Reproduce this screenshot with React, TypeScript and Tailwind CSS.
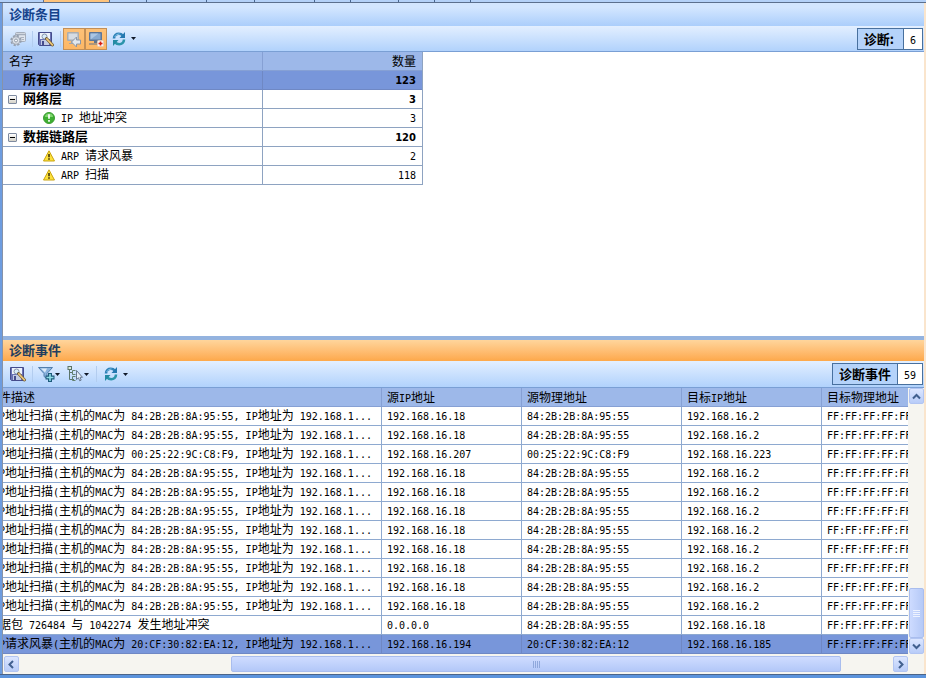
import React from "react";

const LATIN = 'font-["DejaVu_Sans_Mono",monospace] text-[10px] leading-none';

/* Sets Latin runs in a half-width face so they keep step with the full-width characters. */
function Mixed({ children }: { children: string }) {
  const parts = children.split(/([\x20-\x7e]+)/).filter(Boolean);
  return (
    <span className="whitespace-pre">
      {parts.map((p, i) =>
        /^[\x20-\x7e]/.test(p) ? (
          <span key={i} className={LATIN}>
            {p}
          </span>
        ) : (
          p
        ),
      )}
    </span>
  );
}

function SaveFindIcon() {
  return (
    <svg width="18" height="18" viewBox="0 0 18 18" aria-hidden="true">
      <path d="M1.500 2.500h13v13h-12l-1-1z" fill="#6a72b4" stroke="#454c8c" />
      <path d="M3 3h10v6H3z" fill="#eef3fb" />
      <path d="M4 10h8v5H4z" fill="#c3cbe4" />
      <path d="M5 11h2v4H5z" fill="#454c8c" />
      <circle cx="7.500" cy="6.500" r="2.500" fill="#d9ecfa" stroke="#8794ab" />
      <path d="M9.500 8.500l6 6.500" stroke="#6b5733" strokeWidth="3" strokeLinecap="round" />
      <path d="M9.800 8.800l5.600 6" stroke="#eac679" strokeWidth="1.700" strokeLinecap="round" />
    </svg>
  );
}

function SettingsIcon() {
  return (
    <svg width="18" height="18" viewBox="0 0 18 18" aria-hidden="true">
      <rect x="6.500" y="2.500" width="10" height="9" rx="1" fill="#e0e5ed" stroke="#a4adbb" />
      <path d="M7 4.500h9" stroke="#a4adbb" strokeWidth="1.500" />
      <path d="M12 7.500h3M13 9.500h2" stroke="#aab2bf" />
      <circle cx="7" cy="10.500" r="4.700" fill="#d4d9e1" stroke="#959fae" strokeWidth="2" strokeDasharray="2.200 1.500" />
      <circle cx="7" cy="10.500" r="3.800" fill="#dde2e9" stroke="#a2aab7" />
      <circle cx="7" cy="10.500" r="1.500" fill="#f5f8fc" stroke="#929ca9" />
    </svg>
  );
}

function ScreenBackIcon() {
  return (
    <svg width="18" height="18" viewBox="0 0 18 18" aria-hidden="true">
      <rect x="2" y="2" width="12" height="9" rx="1" fill="#a9adb0" />
      <rect x="3.500" y="3.500" width="9" height="6" fill="#d5dce4" />
      <path d="M6 11h4v2H6zM4 13h7v1H4z" fill="#a0a4a9" />
      <path d="M6.500 12l5-5v3h4v4h-4v3z" fill="#e1e7ee" stroke="#8c98a8" />
    </svg>
  );
}

function ScreenAddIcon() {
  return (
    <svg width="18" height="18" viewBox="0 0 18 18" aria-hidden="true">
      <rect x="2" y="2" width="13" height="9" rx="1" fill="#5d7698" />
      <rect x="3.500" y="3.500" width="10" height="6" fill="#87a9d0" />
      <path d="M3.500 9.500v-6h8z" fill="#abc6e4" />
      <path d="M7 11h4v2H7zM2 13.500h9v1H2z" fill="#65758a" />
      <rect x="10.500" y="10.500" width="6" height="6" rx="1" fill="#fff6ef" stroke="#e2cdb9" />
      <path d="M13.500 11.500v4M11.500 13.500h4" stroke="#d81e10" strokeWidth="1.600" />
    </svg>
  );
}

function RefreshIcon() {
  return (
    <svg width="16" height="16" viewBox="0 0 16 16" aria-hidden="true">
      <path d="M3 7.500C3 4.300 5.300 2.800 7.800 2.800c1.700 0 3 .6 3.800 1.600" fill="none" stroke="#2e82b8" strokeWidth="2.600" />
      <path d="M14 1v6H8.500z" fill="#2478af" />
      <path d="M13 8.500c0 3.200-2.300 4.700-4.800 4.700-1.700 0-3-.6-3.800-1.600" fill="none" stroke="#2b94aa" strokeWidth="2.600" />
      <path d="M2 15V9h5.500z" fill="#238aa3" />
      <path d="M3.800 6C4.600 4 6.300 3 8.500 3" fill="none" stroke="#8cc6e8" />
    </svg>
  );
}

function FilterIcon() {
  return (
    <svg width="18" height="18" viewBox="0 0 18 18" aria-hidden="true">
      <path d="M1.500 2.500h14l-5.500 6v5l-3-2v-3z" fill="#8cb4df" stroke="#527fae" />
      <path d="M4 3.500h6l-2 4z" fill="#dcebfa" />
      <path d="M13 8v9M8.500 12.500h9" stroke="#1d5b7c" strokeWidth="4" />
      <path d="M13 9v7M9.500 12.500h7" stroke="#8fdce6" strokeWidth="1.600" />
    </svg>
  );
}

function TreeIcon() {
  return (
    <svg width="18" height="18" viewBox="0 0 18 18" aria-hidden="true">
      <path d="M3.500 4v10.500H8M3.500 7.500H7" fill="none" stroke="#5b7469" />
      <rect x="2" y="1.500" width="3.500" height="3" fill="#dcebdc" stroke="#5b7469" />
      <path d="M9.500 5.500h-3v4h3M9.500 11.500h-3v4h3" fill="none" stroke="#63806f" />
      <path d="M10.500 5.500v9l2-1.700 1.200 3 1.500-.7-1.200-2.800h2.500z" fill="#e4eefa" stroke="#68788f" />
    </svg>
  );
}

function Caret() {
  return (
    <svg width="5" height="3" viewBox="0 0 5 3" aria-hidden="true">
      <path d="M0 0h5L2.500 3z" fill="#101828" />
    </svg>
  );
}

function OkIcon() {
  return (
    <svg width="12" height="12" viewBox="0 0 12 12" aria-hidden="true">
      <circle cx="6" cy="6" r="5.500" fill="#3eae31" stroke="#3c9c33" />
      <path d="M2 5a4 3.500 0 0 1 8 0z" fill="#80d66e" />
      <path d="M6 2.300v4.500M6 8v1.700" stroke="#fff" strokeWidth="1.700" />
    </svg>
  );
}

function WarnIcon() {
  return (
    <svg width="12" height="12" viewBox="0 0 12 12" aria-hidden="true">
      <path d="M6 .8L11.500 11H.5z" fill="#fce13b" stroke="#c9a412" strokeLinejoin="round" />
      <path d="M6 4v3.300M6 8.300v1.500" stroke="#33290a" strokeWidth="1.500" />
    </svg>
  );
}

function Divider() {
  return <span className="mr-[2px] ml-[3px] h-4 w-px bg-[#b3cdef]" />;
}

function ToolButton(props: { label: string; active?: boolean; caret?: string; children: React.ReactNode }) {
  return (
    <button
      type="button"
      aria-label={props.label}
      className={
        "flex h-[22px] items-center justify-center " +
        (props.caret ?? "w-[22px]") +
        (props.active ? " border border-[#c38f56] bg-linear-to-b from-[#fdc178] to-[#fdb765]" : "")
      }
    >
      {props.children}
      {props.caret && <Caret />}
    </button>
  );
}

function Badge({ label, value }: { label: string; value: string }) {
  return (
    <div className="ml-auto flex h-[22px] items-stretch border border-[#48709e] bg-[#b5d3fa] text-[13px] leading-5 font-bold">
      <span className="border-r border-[#48709e] px-[6px] whitespace-pre">{label}</span>
      <span className="flex items-center bg-white px-[6px] font-normal">
        <Mixed>{value}</Mixed>
      </span>
    </div>
  );
}

type TreeRow = { name: string; count: string; kind: "all" | "group" | "ok" | "warn" };

const tree: TreeRow[] = [
  { name: "所有诊断", count: "123", kind: "all" },
  { name: "网络层", count: "3", kind: "group" },
  { name: "IP 地址冲突", count: "3", kind: "ok" },
  { name: "数据链路层", count: "120", kind: "group" },
  { name: "ARP 请求风暴", count: "2", kind: "warn" },
  { name: "ARP 扫描", count: "118", kind: "warn" },
];

function DiagnosisTable() {
  return (
    <table className="w-[420px] table-fixed border-separate border-spacing-0 border-r border-[#8ea3c1] leading-4">
      <thead>
        <tr className="bg-[#9db8e9]">
          <th className="h-[19px] w-[260px] border-r border-b border-[#86a0d4] p-0 pl-[6px] text-left font-normal">名字</th>
          <th className="h-[19px] border-b border-[#86a0d4] p-0 pr-[6px] text-right font-normal">数量</th>
        </tr>
      </thead>
      <tbody>
        {tree.map((r) => {
          const strong = r.kind === "all" || r.kind === "group";
          const cell = r.kind === "all" ? "border-[#6f88c4]" : "border-[#8ea3c1]";
          return (
            <tr key={r.name} className={r.kind === "all" ? "bg-[#7896da]" : "bg-white"}>
              <td className={"h-[19px] border-r border-b p-0 " + cell}>
                <div className={"flex h-[18px] items-center " + (strong ? "text-[13px] font-bold" : "pl-[40px]")}>
                  {r.kind === "all" && <span className="w-[20px]" />}
                  {r.kind === "group" && (
                    <button
                      type="button"
                      aria-label="折叠"
                      className="mr-[6px] ml-[5px] flex size-[9px] items-center justify-center rounded-[1px] border border-[#7f8ba0] bg-linear-to-b from-white to-[#d5d2c8]"
                    >
                      <span className="h-px w-[5px] bg-black" />
                    </button>
                  )}
                  {r.kind === "ok" && <OkIcon />}
                  {r.kind === "warn" && <WarnIcon />}
                  <span className={"pb-0.5 " + (strong ? "" : "pl-[6px]")}>
                    <Mixed>{r.name}</Mixed>
                  </span>
                </div>
              </td>
              <td className={"h-[19px] border-b p-0 pr-[6px] text-right align-top " + cell}>
                {strong ? (
                  <span className='font-["DejaVu_Sans",sans-serif] text-[10px] leading-none font-bold'>{r.count}</span>
                ) : (
                  <Mixed>{r.count}</Mixed>
                )}
              </td>
            </tr>
          );
        })}
      </tbody>
    </table>
  );
}

const scan = (mac: string, srcIp: string, dstIp: string) => [
  `ARP地址扫描(主机的MAC为 ${mac}, IP地址为 192.168.1...`,
  srcIp,
  mac,
  dstIp,
  "FF:FF:FF:FF:FF:FF",
];

const usual = () => scan("84:2B:2B:8A:95:55", "192.168.16.18", "192.168.16.2");

const events: string[][] = [
  usual(),
  usual(),
  scan("00:25:22:9C:C8:F9", "192.168.16.207", "192.168.16.223"),
  ...Array.from({ length: 8 }, usual),
  ["数据包 726484 与 1042274 发生地址冲突", "0.0.0.0", "84:2B:2B:8A:95:55", "192.168.16.18", "FF:FF:FF:FF:FF:FF"],
  [
    "ARP请求风暴(主机的MAC为 20:CF:30:82:EA:12, IP地址为 192.168.1...",
    "192.168.16.194",
    "20:CF:30:82:EA:12",
    "192.168.16.185",
    "FF:FF:FF:FF:FF:FF",
  ],
];

function EventTable() {
  const heads = ["事件描述", "源IP地址", "源物理地址", "目标IP地址", "目标物理地址"];
  const widths = ["w-[400px]", "w-[140px]", "w-[160px]", "w-[140px]", "w-[160px]"];
  return (
    <table className="-ml-[21px] w-[1000px] table-fixed border-separate border-spacing-0 leading-4">
      <thead>
        <tr className="bg-[#9db8e9]">
          {heads.map((h, i) => (
            <th
              key={h}
              className={"h-[19px] border-r border-b border-[#86a0d4] p-0 pl-[5px] text-left font-normal " + widths[i]}
            >
              <Mixed>{h}</Mixed>
            </th>
          ))}
        </tr>
      </thead>
      <tbody>
        {events.map((row, i) => {
          const selected = i === events.length - 1;
          return (
            <tr key={i} className={selected ? "bg-[#7896da]" : "bg-white"}>
              {row.map((c, j) => (
                <td
                  key={j}
                  className={
                    "h-[19px] border-r border-b p-0 pl-[5px] align-top " +
                    (selected ? "border-[#6f88c4]" : "border-[#8ea9d0]")
                  }
                >
                  <Mixed>{c}</Mixed>
                </td>
              ))}
            </tr>
          );
        })}
      </tbody>
    </table>
  );
}

function ScrollButton({ label, d }: { label: string; d: string }) {
  return (
    <button
      type="button"
      aria-label={label}
      className="flex h-4 w-[15px] shrink-0 items-center justify-center rounded-[2px] border border-[#b2c5f2] bg-linear-to-b from-[#dce6ff] to-[#b8ccf8]"
    >
      <svg width="9" height="9" viewBox="0 0 9 9" aria-hidden="true">
        <path d={d} fill="none" stroke="#41608f" strokeWidth="2" />
      </svg>
    </button>
  );
}

export default function App() {
  return (
    <div className='flex min-h-screen flex-col bg-white font-["Noto_Sans_CJK_SC",sans-serif] text-[12px] text-black'>
      <div className="flex h-[3px] border-b border-[#5c708e] bg-[#b4d1f8]">
        <div className="w-[44px] border-r border-[#5c708e]" />
        <div className="w-[66px] border-r border-[#5c708e] bg-[#fdc37c]" />
        {["w-[37px]", "w-[60px]", "w-[48px]", "w-[60px]", "w-[36px]", "w-[48px]", "w-[36px]", "w-[36px]"].map((w, i) => (
          <div key={i} className={"border-r border-[#48668f] " + w} />
        ))}
      </div>

      <div className="flex flex-1 flex-col border-r-2 border-l-2 border-r-[#fae5cd] border-l-[#6d9cdf]">
        <div className="flex flex-1 flex-col border-l border-[#8793a8]">
          <section className="flex flex-1 flex-col">
            <h2 className="h-[23px] bg-linear-to-b from-[#d3e6ff] from-20% to-[#abcefb] pl-[6px] text-[13px] leading-[22px] font-bold text-[#15428b]">
              诊断条目
            </h2>
            <div className="flex h-[26px] items-center border-b border-[#7a9fd4] bg-linear-to-b from-[#e3efff] to-[#b1d2fc] pr-[1px] pl-1">
              <ToolButton label="设置">
                <SettingsIcon />
              </ToolButton>
              <Divider />
              <ToolButton label="查找">
                <SaveFindIcon />
              </ToolButton>
              <Divider />
              <ToolButton label="返回" active>
                <ScreenBackIcon />
              </ToolButton>
              <ToolButton label="添加" active>
                <ScreenAddIcon />
              </ToolButton>
              <ToolButton label="刷新" caret="w-[33px] gap-1">
                <RefreshIcon />
              </ToolButton>
              <Badge label="诊断: " value="6" />
            </div>
            <DiagnosisTable />
          </section>

          <section className="flex flex-col">
            <div className="h-1 bg-[#94b3df]" />
            <h2 className="h-[21px] bg-linear-to-b from-[#ffd59b] to-[#fda849] pl-[6px] text-[13px] leading-5 font-bold text-[#233e5f]">
              诊断事件
            </h2>
            <div className="flex h-[27px] items-center border-b border-[#7a9fd4] bg-linear-to-b from-[#e3efff] to-[#b1d2fc] pr-[1px] pl-1">
              <ToolButton label="查找">
                <SaveFindIcon />
              </ToolButton>
              <Divider />
              <ToolButton label="过滤" caret="w-[27px]">
                <FilterIcon />
              </ToolButton>
              <ToolButton label="树" caret="mx-[2px] w-[27px]">
                <TreeIcon />
              </ToolButton>
              <Divider />
              <ToolButton label="刷新" caret="w-[33px] gap-1">
                <RefreshIcon />
              </ToolButton>
              <Badge label="诊断事件" value="59" />
            </div>

            <div className="flex">
              <div className="min-w-0 flex-1 overflow-hidden">
                <EventTable />
              </div>
              <div className="flex w-4 flex-col items-center bg-[#f6f5f0]">
                <ScrollButton label="向上" d="M1 6.500L4.500 3 8 6.500" />
                <div className="flex-1" />
                <div className="flex h-[50px] w-[15px] flex-col items-center justify-center gap-px rounded-[2px] border border-[#a9bdee] bg-linear-to-r from-[#cddbff] to-[#b5c9f7]">
                  {[0, 1, 2, 3].map((n) => (
                    <span key={n} className="h-px w-[7px] bg-[#eef3ff]" />
                  ))}
                </div>
                <ScrollButton label="向下" d="M1 2.500L4.500 6 8 2.500" />
              </div>
            </div>

            <div className="flex h-5 items-center bg-[#f6f5f0] pr-4 pl-px">
              <ScrollButton label="向左" d="M6 1L2.500 4.500 6 8" />
              <div className="grid flex-1 grid-cols-[212fr_609fr_52fr]">
                <div className="col-start-2 flex h-4 items-center justify-center gap-px rounded-[2px] border border-[#a9bdee] bg-linear-to-b from-[#cfdcff] to-[#b3c8f8]">
                  {[0, 1, 2, 3].map((n) => (
                    <span key={n} className="h-[7px] w-px bg-[#8fa8dc]" />
                  ))}
                </div>
              </div>
              <ScrollButton label="向右" d="M3 1l3.500 3.500L3 8" />
            </div>
          </section>
        </div>
      </div>
      <div className="h-1 border-t border-[#4b6488] bg-[#5b93dc]" />
    </div>
  );
}
